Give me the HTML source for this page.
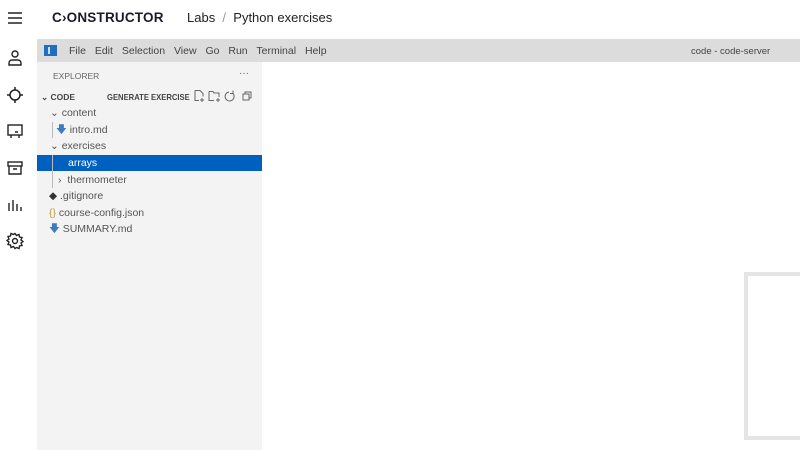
<!DOCTYPE html><html><head><style>
*{margin:0;padding:0;box-sizing:border-box}
body{width:800px;height:450px;overflow:hidden;background:#fff;font-family:"Liberation Sans",sans-serif;position:relative}
.a{position:absolute;white-space:nowrap}
.rail svg{position:absolute;left:6px}
.t{font-size:10px;color:#444}
.row{position:absolute;left:37px;width:225px;height:16px;font-size:10.5px;color:#555;line-height:16px}
</style></head><body>
<div class="a" style="left:37px;top:39px;width:763px;height:23px;background:#dcdcdc"></div>
<div class="a" style="left:37px;top:62px;width:225px;height:388px;background:#f3f3f3"></div>
<div class="a" style="left:744px;top:272px;width:60px;height:168px;border:4px solid #e5e5e5;border-right:none"></div>
<div class="rail">
<svg width="18" height="18" style="top:9px" viewBox="0 0 18 18"><path d="M2 4h14M2 9h14M2 14h14" stroke="#222" stroke-width="1.4"/></svg>
<svg width="18" height="18" style="top:49px" viewBox="0 0 18 18" fill="none" stroke="#222" stroke-width="1.4"><circle cx="9" cy="5" r="3"/><path d="M3 16v-2a3 3 0 0 1 3-3h6a3 3 0 0 1 3 3v2z"/></svg>
<svg width="18" height="18" style="top:86px" viewBox="0 0 18 18" fill="none" stroke="#222" stroke-width="1.5"><circle cx="9" cy="9" r="5"/><path d="M9 1v3M9 14v3M1 9h3M14 9h3"/></svg>
<svg width="18" height="18" style="top:122px" viewBox="0 0 18 18" fill="none" stroke="#222" stroke-width="1.4"><rect x="2" y="3" width="14" height="10"/><path d="M5 13v3M13 13v3M9 10h3"/></svg>
<svg width="18" height="18" style="top:159px" viewBox="0 0 18 18" fill="none" stroke="#222" stroke-width="1.4"><rect x="2" y="3" width="14" height="4"/><path d="M3 7v8h12V7M7 10h4"/></svg>
<svg width="18" height="18" style="top:196px" viewBox="0 0 18 18" stroke="#222" stroke-width="1.4"><path d="M3 15V7M7 15V4M11 15V8M15 15V11"/></svg>
<svg width="18" height="18" style="top:232px" viewBox="0 0 18 18" fill="none" stroke="#222" stroke-width="1.4"><circle cx="9" cy="9" r="2.5"/><path d="M9 1.5l1.5 2 2.5-1 .5 2.5 2.5.5-1 2.5 2 1.5-2 1.5 1 2.5-2.5.5-.5 2.5-2.5-1L9 16.5l-1.5-2-2.5 1-.5-2.5-2.5-.5 1-2.5-2-1.5 2-1.5-1-2.5 2.5-.5.5-2.5 2.5 1z"/></svg>
</div>
<div class="a" style="left:52px;top:10px;font-size:13.5px;font-weight:bold;color:#1a1a2e;letter-spacing:.2px">C›ONSTRUCTOR</div>
<div class="a" style="left:187px;top:10px;font-size:13px;color:#222">Labs &nbsp;<span style="color:#999">/</span>&nbsp; Python exercises</div>
<div class="a" style="left:44px;top:45px;width:13px;height:11px;background:#1f6fc0"><div style="position:absolute;left:4px;top:2px;width:2px;height:7px;background:#cde"></div></div>
<div class="a t" style="left:69px;top:45px;font-size:10.5px;word-spacing:6px">File Edit Selection View Go Run Terminal Help</div>
<div class="a" style="left:691px;top:46px;font-size:9.5px;color:#444">code - code-server</div>
<div class="a" style="left:53px;top:71px;font-size:8.5px;color:#666">EXPLORER</div>
<div class="a" style="left:239px;top:68px;font-size:10px;color:#666">···</div>
<div class="a" style="left:41px;top:92px;font-size:8.5px;color:#444;font-weight:bold">⌄ CODE</div>
<div class="a" style="left:107px;top:92px;font-size:8.5px;color:#444;font-weight:bold;transform:scaleX(.9);transform-origin:left">GENERATE EXERCISE</div>
<svg class="a" style="left:192px;top:89px" width="66" height="14" viewBox="0 0 66 14" fill="none" stroke="#666" stroke-width="1">
<path d="M3 1.5h5l3 3v3M3 1.5v10h4M10 9v4M8 11h4"/>
<path d="M17 2.5h4l1 1.5h5v4M17 2.5v9h5M26 9v4M24 11h4"/>
<path d="M37 3a4.5 4.5 0 1 0 4 1.5M41 1.5v3h-3"/>
<path d="M51 5h6v6h-6zM53 5V3h6v6h-2"/>
</svg>
<div class="row" style="top:105px"><span style="margin-left:13px">⌄ content</span></div>
<div class="row" style="top:122px"><span style="position:absolute;left:15px;top:0;width:1px;height:16px;background:#bbb"></span><span style="margin-left:19px;color:#3c7bbf">🡇</span> intro.md</div>
<div class="row" style="top:138px"><span style="margin-left:13px">⌄ exercises</span></div>
<div class="row" style="top:155px;background:#0060c0;color:#fff"><span style="margin-left:31px">arrays</span></div>
<div class="row" style="top:172px"><span style="position:absolute;left:15px;top:-17px;width:1px;height:33px;background:#bbb"></span><span style="margin-left:21px">›&nbsp; thermometer</span></div>
<div class="row" style="top:188px"><span style="margin-left:12px;color:#333">◆</span> .gitignore</div>
<div class="row" style="top:205px"><span style="margin-left:12px;color:#b8a040">{}</span> course-config.json</div>
<div class="row" style="top:221px"><span style="margin-left:12px;color:#3c7bbf">🡇</span> SUMMARY.md</div>
</body></html>
